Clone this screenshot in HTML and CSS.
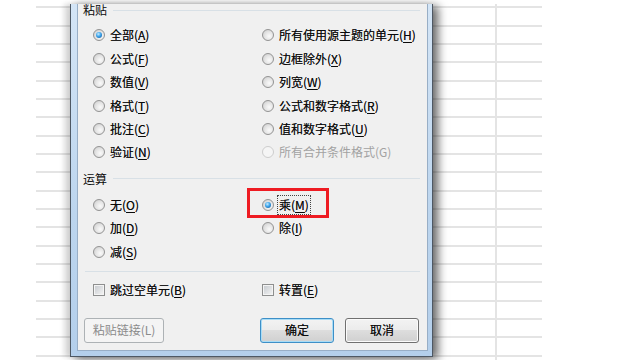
FILE: index.html
```html
<!DOCTYPE html>
<html lang="zh-CN">
<head>
    <meta charset="UTF-8">
    <title>选择性粘贴</title>
    <link rel="stylesheet" href="styles.css">
</head>
<body>
    <div class="sheet">
        <div class="window">
            <div class="client">
                <div class="group-title"><span>粘贴</span></div>
                <div class="options paste">
                    <div class="opt"><span class="radio on"></span>全部(<u>A</u>)</div>
                    <div class="opt"><span class="radio"></span>所有使用源主题的单元(<u>H</u>)</div>
                    <div class="opt"><span class="radio"></span>公式(<u>F</u>)</div>
                    <div class="opt"><span class="radio"></span>边框除外(<u>X</u>)</div>
                    <div class="opt"><span class="radio"></span>数值(<u>V</u>)</div>
                    <div class="opt"><span class="radio"></span>列宽(<u>W</u>)</div>
                    <div class="opt"><span class="radio"></span>格式(<u>T</u>)</div>
                    <div class="opt"><span class="radio"></span>公式和数字格式(<u>R</u>)</div>
                    <div class="opt"><span class="radio"></span>批注(<u>C</u>)</div>
                    <div class="opt"><span class="radio"></span>值和数字格式(<u>U</u>)</div>
                    <div class="opt"><span class="radio"></span>验证(<u>N</u>)</div>
                    <div class="opt disabled"><span class="radio"></span>所有合并条件格式(G)</div>
                </div>

                <div class="group-title ops-title"><span>运算</span></div>
                <div class="options ops">
                    <div class="opt"><span class="radio"></span>无(<u>O</u>)</div>
                    <div class="opt marked">
                        <span class="mark"></span>
                        <span class="radio on"></span><span class="focus">乘(<u>M</u>)</span>
                    </div>
                    <div class="opt"><span class="radio"></span>加(<u>D</u>)</div>
                    <div class="opt"><span class="radio"></span>除(<u>I</u>)</div>
                    <div class="opt"><span class="radio"></span>减(<u>S</u>)</div>
                </div>

                <div class="separator"></div>

                <div class="options checks">
                    <div class="opt"><span class="check"></span>跳过空单元(<u>B</u>)</div>
                    <div class="opt"><span class="check"></span>转置(<u>E</u>)</div>
                </div>

                <div class="buttons">
                    <div class="btn disabled">粘贴链接(L)</div>
                    <div class="btn default">确定</div>
                    <div class="btn">取消</div>
                </div>
            </div>
        </div>
    </div>
</body>
</html>
```

FILE: styles.css
```css
body {
    margin: 0;
    padding-top: 4px;
    width: 620px;
    height: 356px;
    overflow: hidden;
    background: #fff;
    font-family: "Noto Sans CJK SC", "Noto Sans", sans-serif;
    font-size: 12px;
    line-height: 16px;
    color: #0a0a0a;
}

/* worksheet grid behind the dialog */
.sheet {
    position: relative;
    margin-left: 36px;
    width: 506px;
    height: 356px;
    background-image:
        linear-gradient(to right, transparent 459px, #e4e4e4 459px, #e4e4e4 461px, transparent 461px),
        repeating-linear-gradient(to bottom, transparent 0, transparent 2.3px, #e4e4e4 2.3px, #e4e4e4 4.3px, transparent 4.3px, transparent 18.33px);
}

.window {
    position: absolute;
    left: 34px;
    top: 0;
    width: 363px;
    height: 353px;
    box-sizing: border-box;
    padding: 0 4px 5px 6px;
    border: 1px solid #4e5864;
    border-top: none;
    background: linear-gradient(to bottom, #d4e5f6 0%, #bcd5ee 60%, #b4cfeb 100%);
    box-shadow: 5px 2px 9px rgba(0, 0, 0, 0.6), -6px 0 5px rgba(0, 0, 0, 0.13);
}

.client {
    height: 100%;
    box-sizing: border-box;
    border: 1px solid #98aec6;
    border-top: none;
    background: #f0f0f0;
}

.group-title {
    display: flex;
    align-items: center;
    gap: 6px;
    height: 12px;
    padding: 0 7px 0 5px;
    line-height: 12px;
}
.group-title::after {
    content: "";
    flex: 1;
    height: 1px;
    background: #d8e0e6;
}

.options {
    display: grid;
    grid-template-columns: 169px 1fr;
    grid-auto-rows: 23.4px;
    padding-left: 15px;
}
.paste { margin-top: 7.8px; }
.ops-title { margin-top: 8.8px; }
.ops { margin-top: 8.3px; }
.checks { margin-top: 10px; grid-auto-rows: 16px; }

.opt {
    display: flex;
    align-items: center;
    white-space: nowrap;
    text-shadow: 0 0 0.4px rgba(0, 0, 0, 0.6);
}
.opt.disabled { color: #a2a2a2; text-shadow: none; }
.opt.marked { position: relative; }

u { text-decoration-thickness: 1px; text-underline-offset: 2px; }

.radio {
    position: relative;
    flex: none;
    width: 12px;
    height: 12px;
    margin-right: 5px;
    box-sizing: border-box;
    border-radius: 50%;
    border: 1px solid #939393;
    background: radial-gradient(circle at 62% 62%, #fafafa 0, #e6e6e6 45%, #c8c8c8 100%);
}
.radio.on::after {
    content: "";
    position: absolute;
    left: 2px;
    top: 2px;
    width: 6px;
    height: 6px;
    border-radius: 50%;
    background: radial-gradient(circle at 40% 35%, #c4ecff 0, #3da3ea 45%, #0c4f90 100%);
}
.disabled .radio {
    border-color: #cdcdcd;
    background: #f5f5f5;
}

.check {
    flex: none;
    width: 12px;
    height: 12px;
    margin-right: 5px;
    box-sizing: border-box;
    border: 1px solid #8e8f8f;
    background: linear-gradient(135deg, #c4c8cd, #f6f6f6);
    box-shadow: inset 0 0 0 1px #f4f4f4;
}

.focus {
    outline: 1px dotted #444;
    outline-offset: 1px;
}

/* red annotation box around the chosen option */
.mark {
    position: absolute;
    left: -15px;
    top: -5px;
    width: 82px;
    height: 30px;
    box-sizing: border-box;
    border: 3px solid #ee1b22;
}

.separator {
    height: 1px;
    margin: 7.5px 7px 0 7px;
    background: #d8e0e6;
}

.buttons {
    display: flex;
    gap: 11px;
    margin-top: 20px;
    padding: 0 8px 0 6px;
}
.btn {
    display: flex;
    align-items: center;
    justify-content: center;
    width: 74px;
    height: 25px;
    box-sizing: border-box;
    border: 1px solid #707070;
    border-radius: 3px;
    background: linear-gradient(to bottom, #f3f3f3 0%, #ebebeb 50%, #dddddd 50%, #d0d0d0 100%);
    box-shadow: inset 0 0 0 1px #fbfbfb;
    text-shadow: 0 0 0.4px rgba(0, 0, 0, 0.6);
}
.btn.disabled {
    width: 80px;
    margin-right: auto;
    border-color: #adb2b5;
    background: #f4f4f4;
    box-shadow: none;
    color: #8a8a8a;
    text-shadow: none;
}
.btn.default {
    border-color: #3d8fc7;
    box-shadow: inset 0 0 0 1px #a8dcf6;
}
```
